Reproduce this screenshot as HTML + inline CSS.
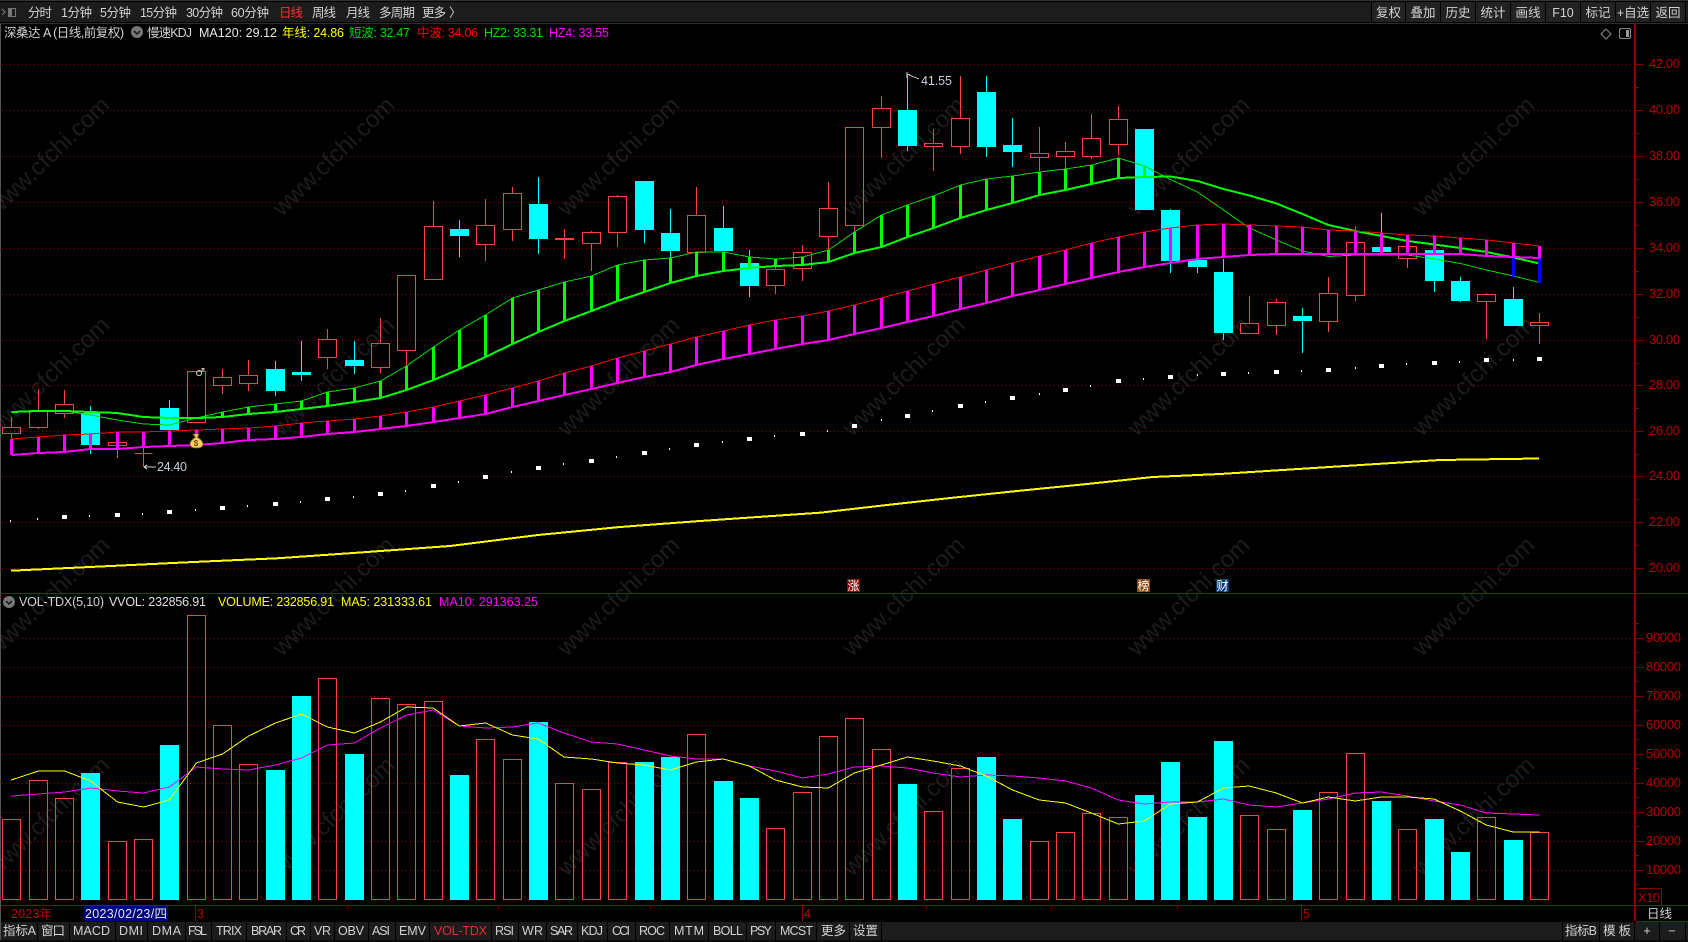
<!DOCTYPE html>
<html><head><meta charset="utf-8"><title>K</title>
<style>
html,body{margin:0;padding:0;background:#000;overflow:hidden}
svg{display:block}
text{font-family:"Liberation Sans","Noto Sans CJK SC",sans-serif;font-size:12.5px}
.t{fill:#d2d2d2}
.ax{fill:#b80000;font-size:13px}
.m{text-anchor:middle}
.w{font-size:24px}
</style></head><body>
<svg width="1688" height="942" viewBox="0 0 1688 942" xmlns="http://www.w3.org/2000/svg">
<rect width="1688" height="942" fill="#000"/>

<!-- watermark -->
<g fill="#1c1c1c" text-anchor="middle">
<text class="w" transform="translate(54 162) rotate(-44)">www.cfchi.com</text>
<text class="w" transform="translate(339 162) rotate(-44)">www.cfchi.com</text>
<text class="w" transform="translate(624 162) rotate(-44)">www.cfchi.com</text>
<text class="w" transform="translate(909 162) rotate(-44)">www.cfchi.com</text>
<text class="w" transform="translate(1194 162) rotate(-44)">www.cfchi.com</text>
<text class="w" transform="translate(1479 162) rotate(-44)">www.cfchi.com</text>
<text class="w" transform="translate(54 382) rotate(-44)">www.cfchi.com</text>
<text class="w" transform="translate(339 382) rotate(-44)">www.cfchi.com</text>
<text class="w" transform="translate(624 382) rotate(-44)">www.cfchi.com</text>
<text class="w" transform="translate(909 382) rotate(-44)">www.cfchi.com</text>
<text class="w" transform="translate(1194 382) rotate(-44)">www.cfchi.com</text>
<text class="w" transform="translate(1479 382) rotate(-44)">www.cfchi.com</text>
<text class="w" transform="translate(54 602) rotate(-44)">www.cfchi.com</text>
<text class="w" transform="translate(339 602) rotate(-44)">www.cfchi.com</text>
<text class="w" transform="translate(624 602) rotate(-44)">www.cfchi.com</text>
<text class="w" transform="translate(909 602) rotate(-44)">www.cfchi.com</text>
<text class="w" transform="translate(1194 602) rotate(-44)">www.cfchi.com</text>
<text class="w" transform="translate(1479 602) rotate(-44)">www.cfchi.com</text>
<text class="w" transform="translate(54 822) rotate(-44)">www.cfchi.com</text>
<text class="w" transform="translate(339 822) rotate(-44)">www.cfchi.com</text>
<text class="w" transform="translate(624 822) rotate(-44)">www.cfchi.com</text>
<text class="w" transform="translate(909 822) rotate(-44)">www.cfchi.com</text>
<text class="w" transform="translate(1194 822) rotate(-44)">www.cfchi.com</text>
<text class="w" transform="translate(1479 822) rotate(-44)">www.cfchi.com</text>
</g>

<g shape-rendering="crispEdges" fill="none">
<!-- grids -->
<path stroke="#a00000" stroke-dasharray="1 3" d="M2 64.5H1634M2 110.5H1634M2 156.5H1634M2 202.5H1634M2 248.5H1634M2 294.5H1634M2 340.5H1634M2 385.5H1634M2 431.5H1634M2 476.5H1634M2 522.5H1634M2 568.5H1634M2 638.5H1634M2 667.5H1634M2 696.5H1634M2 725.5H1634M2 754.5H1634M2 783.5H1634M2 812.5H1634M2 841.5H1634M2 870.5H1634"/>
<!-- axis -->
<path stroke="#8a0000" stroke-width="2" d="M1635 23V921"/>
<path stroke="#8a0000" d="M0 593.5H1688M0 905.5H1688M1636 921.5H1688"/>
<path stroke="#8a0000" d="M1636 64.5h8M1636 110.5h8M1636 156.5h8M1636 202.5h8M1636 248.5h8M1636 294.5h8M1636 340.5h8M1636 385.5h8M1636 431.5h8M1636 476.5h8M1636 522.5h8M1636 568.5h8M1636 87.5h3M1636 133.5h3M1636 179.5h3M1636 225.5h3M1636 271.5h3M1636 317.5h3M1636 363.5h3M1636 408.5h3M1636 454.5h3M1636 499.5h3M1636 545.5h3M1636 638.5h8M1636 667.5h8M1636 696.5h8M1636 725.5h8M1636 754.5h8M1636 783.5h8M1636 812.5h8M1636 841.5h8M1636 870.5h8M1636 623.5h3M1636 652.5h3M1636 681.5h3M1636 710.5h3M1636 739.5h3M1636 768.5h3M1636 797.5h3M1636 826.5h3M1636 855.5h3M1636 884.5h3"/>
<path stroke="#8a0000" d="M1636.5 888.5H1661.5V905"/>
<path stroke="#8a0000" d="M195.5 906V921M802.5 906V921M1301.5 906V921M347.5 906v3M498.5 906v3M650.5 906v3M926.5 906v3M1051.5 906v3M1177.5 906v3"/>

<!-- red candles -->
<path stroke="#ff4040" d="M2.5 427.5h18v6h-18zM11.5 417V427.5M11.5 433.5V439M29.5 410.5h18v17h-18zM38.5 389V410.5M38.5 427.5V429M55.5 404.5h18v9h-18zM64.5 390V404.5M64.5 413.5V418M108.5 442.5h18v3h-18zM117.5 432V442.5M117.5 445.5V458M134.5 453.5h18M143.5 447V467M187.5 371.5h18v51h-18zM213.5 377.5h18v8h-18zM222.5 369V377.5M222.5 385.5V394M239.5 375.5h18v8h-18zM248.5 360V375.5M248.5 383.5V391M318.5 339.5h18v18h-18zM327.5 329V339.5M327.5 357.5V369M371.5 343.5h18v24h-18zM380.5 318V343.5M380.5 367.5V373M397.5 275.5h18v75h-18zM406.5 350.5V367M424.5 226.5h18v53h-18zM433.5 201V226.5M476.5 225.5h18v19h-18zM485.5 199V225.5M485.5 244.5V261M503.5 193.5h18v36h-18zM512.5 187V193.5M512.5 229.5V241M555.5 238.5h18v1h-18zM564.5 229V238.5M564.5 239.5V259M582.5 232.5h18v11h-18zM591.5 231V232.5M591.5 243.5V271M608.5 196.5h18v36h-18zM617.5 195V196.5M617.5 232.5V247M687.5 215.5h18v37h-18zM696.5 187V215.5M766.5 269.5h18v16h-18zM775.5 265V269.5M775.5 285.5V294M793.5 252.5h18v16h-18zM802.5 245V252.5M802.5 268.5V281M819.5 208.5h18v28h-18zM828.5 182V208.5M828.5 236.5V250M845.5 127.5h18v98h-18zM854.5 225.5V232M872.5 108.5h18v19h-18zM881.5 96V108.5M881.5 127.5V158M924.5 143.5h18v3h-18zM933.5 129V143.5M933.5 146.5V171M951.5 118.5h18v28h-18zM960.5 76V118.5M960.5 146.5V154M1030.5 153.5h18v4h-18zM1039.5 127V153.5M1039.5 157.5V171M1056.5 151.5h18v5h-18zM1065.5 142V151.5M1065.5 156.5V169M1082.5 138.5h18v18h-18zM1091.5 114V138.5M1091.5 156.5V159M1109.5 119.5h18v25h-18zM1118.5 106V119.5M1118.5 144.5V155M1240.5 323.5h18v10h-18zM1249.5 296V323.5M1267.5 302.5h18v23h-18zM1276.5 299V302.5M1276.5 325.5V335M1319.5 293.5h18v28h-18zM1328.5 277V293.5M1328.5 321.5V332M1346.5 242.5h18v53h-18zM1355.5 226V242.5M1355.5 295.5V301M1398.5 246.5h18v12h-18zM1407.5 258.5V268M1477.5 294.5h18v7h-18zM1486.5 293V294.5M1486.5 301.5V339M1530.5 322.5h18v3h-18zM1539.5 313V322.5M1539.5 325.5V344"/>
<!-- cyan wicks -->
<path stroke="#00ffff" d="M90.5 406V454M169.5 400V431M275.5 361V396M301.5 341V381M354.5 341V374M459.5 220V257M538.5 177V254M644.5 181V243M670.5 209V258M723.5 206V251M749.5 250V297M907.5 75V151M986.5 76V157M1012.5 118V167M1170.5 209V273M1197.5 234V273M1223.5 259V340M1302.5 308V353M1381.5 213V254M1434.5 250V292M1460.5 277V302M1513.5 287V326"/>
<!-- cyan bodies -->
<path stroke="none" fill="#00ffff" d="M81 413h19V445h-19zM160 408h19V430h-19zM266 369h19V391h-19zM292 372h19V375h-19zM345 360h19V366h-19zM450 229h19V236h-19zM529 204h19V239h-19zM635 181h19V230h-19zM661 233h19V251h-19zM714 228h19V251h-19zM740 263h19V286h-19zM898 110h19V146h-19zM977 92h19V147h-19zM1003 145h19V152h-19zM1135 129h19V210h-19zM1161 210h19V261h-19zM1188 260h19V267h-19zM1214 272h19V333h-19zM1293 316h19V321h-19zM1372 247h19V252h-19zM1425 250h19V281h-19zM1451 281h19V301h-19zM1504 299h19V326h-19z"/>

<!-- yellow long MA -->
<polyline stroke="#ffff00" stroke-width="2" points="11,570.7 90,567 200,561.7 277,558.3 353,553 450,546 538,535 620,527 700,521 820,512.7 887,505 953,497.7 1020,490.7 1087,484 1153,477 1220,474 1345,466 1440,460 1539,458.5"/>

<!-- green band -->
<polyline stroke="#00d800" points="11.5,412 38.5,411 64.5,411 90.5,415 117.5,420 143.5,424 169.5,425 196.5,418 222.5,412 248.5,407 275.5,404 301.5,401 327.5,392 354.5,388 380.5,381 406.5,366 433.5,347 459.5,330 485.5,315 512.5,298 538.5,290 564.5,282 591.5,276 617.5,265 644.5,260 670.5,258 696.5,252 723.5,252 749.5,257 775.5,259 802.5,257 828.5,250 854.5,232 881.5,215 907.5,205 933.5,196 960.5,185 986.5,179 1012.5,176 1039.5,172 1065.5,169 1091.5,165 1118.5,158 1144.5,166 1170.5,179.5 1197.5,192 1223.5,210 1249.5,228 1276.5,240 1302.5,251 1328.5,256.5 1355.5,255 1381.5,255 1407.5,255 1434.5,259 1460.5,263.5 1486.5,270 1513.5,276 1539.5,282.5"/>
<path stroke="#00ff00" stroke-width="3" d="M222.5 412V417M248.5 407V414M275.5 404V412M301.5 401V409M327.5 392V406M354.5 388V402M380.5 381V398M406.5 366V390M433.5 347V380M459.5 330V369M485.5 315V357M512.5 298V344M538.5 290V332M564.5 282V321M591.5 276V311M617.5 265V301M644.5 260V292M670.5 258V283M696.5 252V276M723.5 252V271M749.5 257V268M775.5 259V266M802.5 257V265M828.5 250V262M854.5 232V253M881.5 215V247M907.5 205V237M933.5 196V228M960.5 185V218M986.5 179V210M1012.5 176V203M1039.5 172V195M1065.5 169V190M1091.5 165V184M1118.5 158V178M1144.5 166V177"/>
<polyline stroke="#00ff00" stroke-width="2" points="11.5,412 38.5,411 64.5,411 90.5,412 117.5,413 143.5,417 169.5,418 196.5,418 222.5,417 248.5,414 275.5,412 301.5,409 327.5,406 354.5,402 380.5,398 406.5,390 433.5,380 459.5,369 485.5,357 512.5,344 538.5,332 564.5,321 591.5,311 617.5,301 644.5,292 670.5,283 696.5,276 723.5,271 749.5,268 775.5,266 802.5,265 828.5,262 854.5,253 881.5,247 907.5,237 933.5,228 960.5,218 986.5,210 1012.5,203 1039.5,195 1065.5,190 1091.5,184 1118.5,178 1144.5,177 1170.5,176.5 1197.5,181 1223.5,189 1249.5,195.5 1276.5,203.5 1302.5,214 1328.5,225 1355.5,231 1381.5,236 1407.5,241 1434.5,244.5 1460.5,248 1486.5,252 1513.5,257.5 1539.5,263.5"/>

<!-- red/magenta band -->
<polyline stroke="#ff0000" points="11.5,439 38.5,437 64.5,435 90.5,434 117.5,432 143.5,432 169.5,431 196.5,430 222.5,429 248.5,428 275.5,426 301.5,423 327.5,421 354.5,419 380.5,416 406.5,412 433.5,407 459.5,401 485.5,395 512.5,388 538.5,381 564.5,373 591.5,366 617.5,358 644.5,351 670.5,344 696.5,337 723.5,331 749.5,325 775.5,320 802.5,316 828.5,311 854.5,305 881.5,298 907.5,291 933.5,284 960.5,277 986.5,270 1012.5,263 1039.5,256 1065.5,250 1091.5,243 1118.5,237 1144.5,232 1170.5,228 1197.5,225 1223.5,224 1249.5,225 1276.5,226 1302.5,227 1328.5,230 1355.5,231 1381.5,233 1407.5,235 1434.5,236 1460.5,238 1486.5,240 1513.5,243 1539.5,246"/>
<path stroke="#ff00ff" stroke-width="3" d="M11.5 439V455M38.5 437V453M64.5 435V452M90.5 434V449M117.5 432V449M143.5 432V447M169.5 431V446M196.5 430V445M222.5 429V443M248.5 428V440M275.5 426V439M301.5 423V437M327.5 421V434M354.5 419V432M380.5 416V429M406.5 412V426M433.5 407V422M459.5 401V418M485.5 395V414M512.5 388V407M538.5 381V401M564.5 373V395M591.5 366V389M617.5 358V383M644.5 351V377M670.5 344V372M696.5 337V365M723.5 331V359M749.5 325V354M775.5 320V349M802.5 316V344M828.5 311V340M854.5 305V334M881.5 298V328M907.5 291V322M933.5 284V316M960.5 277V309M986.5 270V303M1012.5 263V296M1039.5 256V290M1065.5 250V284M1091.5 243V278M1118.5 237V272M1144.5 232V267M1170.5 228V263M1197.5 225V259M1223.5 224V257M1249.5 225V255M1276.5 226V254M1302.5 227V254M1328.5 230V254M1355.5 231V254M1381.5 233V254M1407.5 235V254M1434.5 236V254M1460.5 238V254M1486.5 240V256M1513.5 243V257M1539.5 246V258"/>
<path stroke="#0000ff" stroke-width="3" d="M1513.5 257V277M1539.5 258V283"/>
<polyline stroke="#ff00ff" stroke-width="2" points="11.5,455 38.5,453 64.5,452 90.5,449 117.5,449 143.5,447 169.5,446 196.5,445 222.5,443 248.5,440 275.5,439 301.5,437 327.5,434 354.5,432 380.5,429 406.5,426 433.5,422 459.5,418 485.5,414 512.5,407 538.5,401 564.5,395 591.5,389 617.5,383 644.5,377 670.5,372 696.5,365 723.5,359 749.5,354 775.5,349 802.5,344 828.5,340 854.5,334 881.5,328 907.5,322 933.5,316 960.5,309 986.5,303 1012.5,296 1039.5,290 1065.5,284 1091.5,278 1118.5,272 1144.5,267 1170.5,263 1197.5,259 1223.5,257 1249.5,255 1276.5,254 1302.5,254 1328.5,254 1355.5,254 1381.5,254 1407.5,254 1434.5,254 1460.5,254 1486.5,256 1513.5,257 1539.5,258"/>

<!-- white dotted MA -->
<path stroke="none" fill="#fff" d="M10 520h1v2h-1zM37 518h1v2h-1zM62 515h5v4h-5zM89 515h1v2h-1zM115 513h5v4h-5zM142 513h1v2h-1zM167 510h5v4h-5zM195 509h1v2h-1zM220 506h5v4h-5zM247 505h1v2h-1zM273 502h5v4h-5zM300 501h1v2h-1zM325 497h5v4h-5zM353 496h1v2h-1zM378 492h5v4h-5zM405 490h1v2h-1zM431 484h5v4h-5zM458 481h1v2h-1zM483 475h5v4h-5zM511 471h1v2h-1zM536 466h5v4h-5zM563 463h1v2h-1zM589 459h5v4h-5zM616 456h1v2h-1zM642 451h5v4h-5zM669 448h1v2h-1zM694 443h5v4h-5zM722 441h1v2h-1zM747 437h5v4h-5zM774 435h1v2h-1zM800 432h5v4h-5zM827 430h1v2h-1zM852 424h5v4h-5zM881 419h1v2h-1zM905 414h5v4h-5zM932 410h1v2h-1zM958 404h5v4h-5zM985 401h1v2h-1zM1010 396h5v4h-5zM1039 393h1v2h-1zM1063 388h5v4h-5zM1090 385h1v2h-1zM1116 379h5v4h-5zM1143 378h1v2h-1zM1168 375h5v4h-5zM1197 374h1v2h-1zM1221 372h5v4h-5zM1248 372h1v2h-1zM1274 370h5v4h-5zM1301 370h1v2h-1zM1326 368h5v4h-5zM1355 367h1v2h-1zM1379 364h5v4h-5zM1406 363h1v2h-1zM1432 361h5v4h-5zM1459 361h1v2h-1zM1484 358h5v4h-5zM1513 359h1v2h-1zM1537 357h5v4h-5z"/>

<!-- volume bars -->
<path stroke="#ff4040" d="M2.5 819.5h18V899.5h-18zM29.5 780.5h18V899.5h-18zM55.5 798.5h18V899.5h-18zM108.5 841.5h18V899.5h-18zM134.5 839.5h18V899.5h-18zM187.5 615.5h18V899.5h-18zM213.5 725.5h18V899.5h-18zM239.5 764.5h18V899.5h-18zM318.5 678.5h18V899.5h-18zM371.5 698.5h18V899.5h-18zM397.5 704.5h18V899.5h-18zM424.5 701.5h18V899.5h-18zM476.5 739.5h18V899.5h-18zM503.5 759.5h18V899.5h-18zM555.5 783.5h18V899.5h-18zM582.5 789.5h18V899.5h-18zM608.5 762.5h18V899.5h-18zM687.5 734.5h18V899.5h-18zM766.5 828.5h18V899.5h-18zM793.5 792.5h18V899.5h-18zM819.5 736.5h18V899.5h-18zM845.5 718.5h18V899.5h-18zM872.5 749.5h18V899.5h-18zM924.5 811.5h18V899.5h-18zM951.5 768.5h18V899.5h-18zM1030.5 841.5h18V899.5h-18zM1056.5 832.5h18V899.5h-18zM1082.5 813.5h18V899.5h-18zM1109.5 817.5h18V899.5h-18zM1240.5 815.5h18V899.5h-18zM1267.5 829.5h18V899.5h-18zM1319.5 792.5h18V899.5h-18zM1346.5 753.5h18V899.5h-18zM1398.5 829.5h18V899.5h-18zM1477.5 817.5h18V899.5h-18zM1530.5 832.5h18V899.5h-18z"/>
<path stroke="none" fill="#00ffff" d="M81 773h19V900h-19zM160 745h19V900h-19zM266 770h19V900h-19zM292 696h19V900h-19zM345 754h19V900h-19zM450 775h19V900h-19zM529 722h19V900h-19zM635 762h19V900h-19zM661 757h19V900h-19zM714 781h19V900h-19zM740 798h19V900h-19zM898 784h19V900h-19zM977 757h19V900h-19zM1003 819h19V900h-19zM1135 795h19V900h-19zM1161 762h19V900h-19zM1188 817h19V900h-19zM1214 741h19V900h-19zM1293 810h19V900h-19zM1372 801h19V900h-19zM1425 819h19V900h-19zM1451 852h19V900h-19zM1504 840h19V900h-19z"/>
<polyline stroke="#ff00ff" points="11,796 38.6,794 64.6,792 90.7,788 117.5,791 143.6,793 169.3,787 196.4,767 222.5,769 248.6,770 275.4,765 301.4,758 327.5,745 354.3,743 380.4,728 406.8,715 433.2,710 459.3,726 485.7,728 512.5,727 538.2,723 564,733 591.4,742 617.5,744 644.3,750 670.4,756 696.4,759 723.2,759 749.3,766 775.4,771 802.5,778 828.2,774 854.3,767 881.4,766 907.5,768 933.2,773 960.4,777 986.4,775 1012.5,776 1039.3,778 1065.4,781 1091.4,788 1118.2,800 1144.2,804 1170.5,802 1197.5,802 1223.4,799 1249.2,805 1276.2,807 1302.5,803 1328.4,799 1355.4,793 1381.2,792 1407.5,796 1434,801 1460.4,805 1486.2,813 1513.2,814 1539.5,815"/>
<polyline stroke="#ffff00" points="11,780 38.6,771 64.6,771 90.7,781 117.5,802 143.6,807 169.3,800 196.4,763 222.5,754 248.6,736 275.4,723 301.4,714 327.5,727 354.3,733 380.4,722 406.8,707 433.2,708 459.3,726 485.7,723 512.5,735 538.2,739 564,757 591.4,759 617.5,763 644.3,765 670.4,770 696.4,762 723.2,759 749.3,766 775.4,780 802.5,787 828.2,788 854.3,773 881.4,765 907.5,757 933.2,761 960.4,766 986.4,776 1012.5,790 1039.3,800 1065.4,803 1091.4,813 1118.2,824 1144.2,821 1170.5,804 1197.5,802 1223.4,788 1249.2,786 1276.2,793 1302.5,803 1328.4,797 1355.4,801 1381.2,797 1407.5,797 1434,799 1460.4,811 1486.2,825 1513.2,832 1539.5,832"/>

<!-- high/low arrows -->
<path stroke="#c8c8c8" d="M907 74.5h3M907 72v6M909 75l10 4M144 467h12M144 467l3-2M144 467l3 2"/>

<!-- marker boxes -->
<rect x="847" y="579" width="13" height="13" fill="#8b0a0a" stroke="none"/>
<rect x="1137" y="579" width="13" height="13" fill="#8b4a12" stroke="none"/>
<rect x="1216" y="579" width="13" height="13" fill="#0a3a7a" stroke="none"/>

<!-- top bar -->
<rect x="0" y="0" width="1688" height="1" fill="#333" stroke="none"/>
<rect x="0" y="2" width="1688" height="20" fill="#1c1c1c" stroke="none"/>
<rect x="0" y="23" width="1688" height="1" fill="#2e2e2e" stroke="none"/>
<rect x="1372" y="2" width="313" height="20" fill="#222" stroke="none"/>
<path stroke="#000" d="M1371.5 2V22M1405.5 2V22M1440.5 2V22M1475.5 2V22M1510.5 2V22M1545.5 2V22M1580.5 2V22M1615.5 2V22M1650.5 2V22M1685.5 2V22"/>
<path stroke="#777" d="M8.500 8.500h7v8h-7zM2 9l3 3l-3 3"/>
<rect x="9" y="9" width="3" height="7" fill="#777" stroke="none"/>

<!-- bottom bar -->
<rect x="0" y="922" width="1688" height="18" fill="#1c1c1c" stroke="none"/>
<rect x="0" y="940" width="1688" height="2" fill="#0c0c0c" stroke="none"/>
<path stroke="#000" d="M37.5 922V940M69.5 922V940M115.5 922V940M147.5 922V940M185.5 922V940M211.5 922V940M246.5 922V940M286.5 922V940M310.5 922V940M334.5 922V940M368.5 922V940M395.5 922V940M429.5 922V940M491.5 922V940M518.5 922V940M546.5 922V940M577.5 922V940M607.5 922V940M635.5 922V940M669.5 922V940M708.5 922V940M746.5 922V940M775.5 922V940M816.5 922V940M849.5 922V940M881.5 922V940M1562.5 922V940M1599.5 922V940M1634.5 922V940M1659.5 922V940M1685.5 922V940"/>
<rect x="84" y="906" width="84" height="15" fill="#000080" stroke="none"/>
<path stroke="#555" d="M0.5 24V940"/>

<!-- small icons -->
<path stroke="#888" d="M1606 29l5 5l-5 5l-5-5z" shape-rendering="geometricPrecision"/>
<rect x="1619.5" y="28.5" width="11" height="10" rx="2" stroke="#888" stroke-width="1.2"/>
<rect x="1626" y="30" width="3" height="7" fill="#999" stroke="none"/>
</g>

<circle cx="137" cy="32" r="6" fill="#777"/>
<path d="M134 31l3 3l3-3" stroke="#111" stroke-width="1.4" fill="none"/>
<circle cx="9" cy="602" r="6" fill="#777"/>
<path d="M6 601l3 3l3-3" stroke="#111" stroke-width="1.4" fill="none"/>

<!-- money bag -->
<path d="M193 434h6l-1.500 3.500c3.500 1.500 5.500 4.500 5.500 6.500c0 3-3 4-6.500 4s-6.500-1-6.500-4c0-2 2-5 5.500-6.500z" fill="#f5d060" stroke="#8a6010" stroke-width=".8"/>
<text x="196" y="446" class="m" style="font-size:8px;font-weight:bold" fill="#7a4a00">$</text>
<text x="200" y="376" class="m" style="font-size:11px;font-family:'DejaVu Sans',sans-serif" fill="#ccc">♂</text>

<!-- top bar text -->
<g class="t">
<text x="28" y="17" class="t" textLength="24">分时</text>
<text x="61" y="17" class="t" textLength="31">1分钟</text>
<text x="100" y="17" class="t" textLength="31">5分钟</text>
<text x="140" y="17" class="t" textLength="37">15分钟</text>
<text x="186" y="17" class="t" textLength="37">30分钟</text>
<text x="231" y="17" class="t" textLength="38">60分钟</text>
<text x="279" y="17" fill="#ff3030" textLength="24">日线</text>
<text x="312" y="17" class="t" textLength="24">周线</text>
<text x="346" y="17" class="t" textLength="24">月线</text>
<text x="379" y="17" class="t" textLength="36">多周期</text>
<text x="422" y="17" class="t" textLength="24">更多</text>
<text x="449" y="17" class="t">〉</text>
<text x="1388.5" y="17" class="t m">复权</text>
<text x="1423" y="17" class="t m">叠加</text>
<text x="1458" y="17" class="t m">历史</text>
<text x="1493" y="17" class="t m">统计</text>
<text x="1528" y="17" class="t m">画线</text>
<text x="1563" y="17" class="t m">F10</text>
<text x="1598" y="17" class="t m">标记</text>
<text x="1633" y="17" class="t m">+自选</text>
<text x="1668" y="17" class="t m">返回</text>
</g>

<!-- legend -->
<text x="4" y="37" class="t" textLength="120">深桑达 A (日线,前复权)</text>
<text x="147" y="37" class="t" textLength="45">慢速KDJ</text>
<text x="199" y="37" fill="#e8e8e8" textLength="78">MA120: 29.12</text>
<text x="282" y="37" fill="#ffff00" textLength="62">年线: 24.86</text>
<text x="349" y="37" fill="#00d800" textLength="61">短波: 32.47</text>
<text x="417" y="37" fill="#ff0000" textLength="61">中波: 34.06</text>
<text x="484" y="37" fill="#00e000" textLength="59">HZ2: 33.31</text>
<text x="549" y="37" fill="#ff00ff" textLength="60">HZ4: 33.55</text>

<text x="19" y="606" class="t" textLength="85">VOL-TDX(5,10)</text>
<text x="109" y="606" fill="#e0e0e0" textLength="97">VVOL: 232856.91</text>
<text x="218" y="606" fill="#ffff00" textLength="116">VOLUME: 232856.91</text>
<text x="341" y="606" fill="#ffff00" textLength="91">MA5: 231333.61</text>
<text x="439" y="606" fill="#ff00ff" textLength="99">MA10: 291363.25</text>

<!-- labels on chart -->
<text x="921" y="85" fill="#c8d0dc" textLength="31">41.55</text>
<text x="157" y="471" fill="#c8d0dc" textLength="30">24.40</text>
<text x="853.5" y="590" class="m" style="font-size:12px" fill="#fff">涨</text>
<text x="1143.5" y="590" class="m" style="font-size:12px" fill="#fff">榜</text>
<text x="1222.5" y="590" class="m" style="font-size:12px" fill="#fff">财</text>

<!-- price axis -->
<g class="ax">
<text class="ax" x="1649" y="68" textLength="31">42.00</text>
<text class="ax" x="1649" y="114" textLength="31">40.00</text>
<text class="ax" x="1649" y="160" textLength="31">38.00</text>
<text class="ax" x="1649" y="206" textLength="31">36.00</text>
<text class="ax" x="1649" y="252" textLength="31">34.00</text>
<text class="ax" x="1649" y="298" textLength="31">32.00</text>
<text class="ax" x="1649" y="344" textLength="31">30.00</text>
<text class="ax" x="1649" y="389" textLength="31">28.00</text>
<text class="ax" x="1649" y="435" textLength="31">26.00</text>
<text class="ax" x="1649" y="480" textLength="31">24.00</text>
<text class="ax" x="1649" y="526" textLength="31">22.00</text>
<text class="ax" x="1649" y="572" textLength="31">20.00</text>
<text class="ax" x="1646" y="642" textLength="35">90000</text>
<text class="ax" x="1646" y="671" textLength="35">80000</text>
<text class="ax" x="1646" y="700" textLength="35">70000</text>
<text class="ax" x="1646" y="729" textLength="35">60000</text>
<text class="ax" x="1646" y="758" textLength="35">50000</text>
<text class="ax" x="1646" y="787" textLength="35">40000</text>
<text class="ax" x="1646" y="816" textLength="35">30000</text>
<text class="ax" x="1646" y="845" textLength="35">20000</text>
<text class="ax" x="1646" y="874" textLength="35">10000</text>
<text class="ax" x="1638" y="902" textLength="22">X10</text>
</g>

<!-- date row -->
<text x="11" y="918" fill="#c00000" textLength="41">2023年</text>
<text x="85" y="918" fill="#e6e6e6" textLength="82">2023/02/23/四</text>
<text x="197" y="918" fill="#c00000">3</text>
<text x="804" y="918" fill="#c00000">4</text>
<text x="1303" y="918" fill="#c00000">5</text>
<text x="1659.5" y="918" class="t m">日线</text>

<!-- bottom tabs -->
<g>
<text x="3" y="935" class="t" textLength="33">指标A</text>
<text x="41" y="935" class="t" textLength="24">窗口</text>
<text x="73" y="935" class="t" textLength="37">MACD</text>
<text x="119" y="935" class="t" textLength="24">DMI</text>
<text x="152" y="935" class="t" textLength="29">DMA</text>
<text x="188" y="935" class="t" textLength="19">FSL</text>
<text x="216" y="935" class="t" textLength="26">TRIX</text>
<text x="251" y="935" class="t" textLength="31">BRAR</text>
<text x="290" y="935" class="t" textLength="16">CR</text>
<text x="314" y="935" class="t" textLength="17">VR</text>
<text x="338" y="935" class="t" textLength="26">OBV</text>
<text x="372" y="935" class="t" textLength="18">ASI</text>
<text x="399" y="935" class="t" textLength="27">EMV</text>
<text x="434" y="935" fill="#e03030" textLength="53">VOL-TDX</text>
<text x="495" y="935" class="t" textLength="19">RSI</text>
<text x="522" y="935" class="t" textLength="21">WR</text>
<text x="550" y="935" class="t" textLength="23">SAR</text>
<text x="581" y="935" class="t" textLength="22">KDJ</text>
<text x="612" y="935" class="t" textLength="18">CCI</text>
<text x="639" y="935" class="t" textLength="26">ROC</text>
<text x="674" y="935" class="t" textLength="30">MTM</text>
<text x="713" y="935" class="t" textLength="30">BOLL</text>
<text x="750" y="935" class="t" textLength="22">PSY</text>
<text x="780" y="935" class="t" textLength="33">MCST</text>
<text x="821" y="935" class="t" textLength="25">更多</text>
<text x="853" y="935" class="t" textLength="25">设置</text>
<text x="1565" y="935" class="t" textLength="32">指标B</text>
<text x="1603" y="935" class="t" textLength="28">模 板</text>
<text x="1647" y="935" class="t m">+</text>
<text x="1672" y="935" class="t m">−</text>
</g>
</svg>
</body></html>
